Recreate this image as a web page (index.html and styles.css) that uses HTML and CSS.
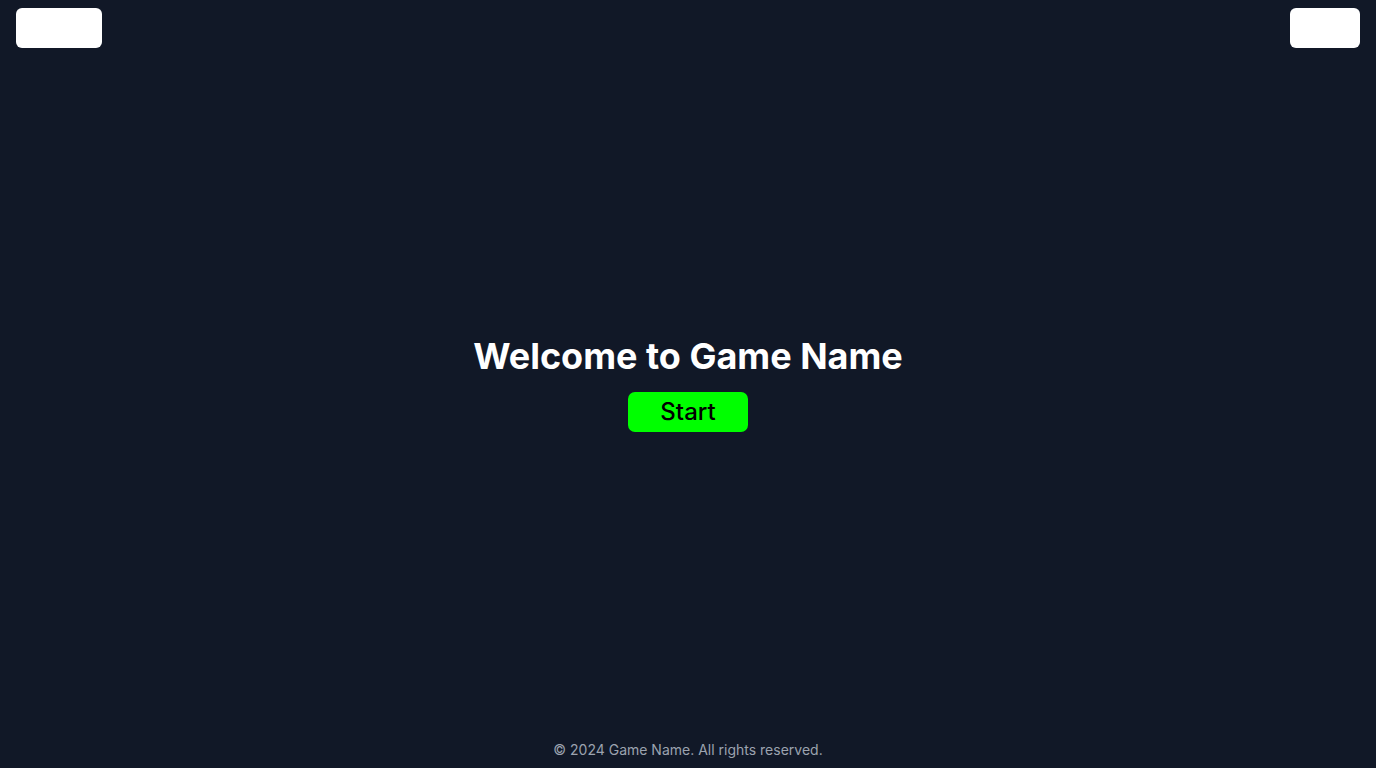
FILE: index.html
```html
<!DOCTYPE html>
<html lang="en">
<head>
<meta charset="utf-8">
<title>Game Name</title>
<link rel="stylesheet" href="styles.css">
</head>
<body>
<div class="page">
  <header class="topbar">
    <button class="pill pill-left" aria-label="Menu"></button>
    <button class="pill pill-right" aria-label="Settings"></button>
  </header>
  <main class="hero">
    <h1 class="title">Welcome to Game Name</h1>
    <button class="start">Start</button>
  </main>
  <footer class="footer">© 2024 Game Name. All rights reserved.</footer>
</div>
</body>
</html>
```
FILE: styles.css
```css
* { box-sizing: border-box; }
html, body { margin: 0; padding: 0; height: 100%; }
body {
  background: #111827;
  font-family: Inter, "Noto Sans", "Liberation Sans", sans-serif;
  color: #fff;
}
.page {
  display: grid;
  grid-template: 1fr / 1fr;
  height: 100vh;
}
.page > * { grid-area: 1 / 1; }
.topbar {
  align-self: start;
  display: flex;
  justify-content: space-between;
  padding: 8px 16px;
}
.pill {
  height: 40px;
  border: none;
  border-radius: 6px;
  background: #fff;
  padding: 0;
}
.pill-left { width: 86px; }
.pill-right { width: 70px; }
.hero {
  align-self: center;
  display: flex;
  flex-direction: column;
  align-items: center;
  gap: 16px;
}
.title {
  margin: 0;
  font-size: 36px;
  line-height: 40px;
  font-weight: 700;
  color: #fff;
}
.start {
  font-family: inherit;
  font-size: 24px;
  font-weight: 500;
  line-height: 32px;
  padding: 4px 32px;
  width: 120px;
  border: none;
  border-radius: 7px;
  background: #00ff00;
  color: #000;
}
.footer {
  align-self: end;
  text-align: center;
  font-size: 14px;
  line-height: 20px;
  color: #9ca3af;
  padding-bottom: 8px;
}
```
